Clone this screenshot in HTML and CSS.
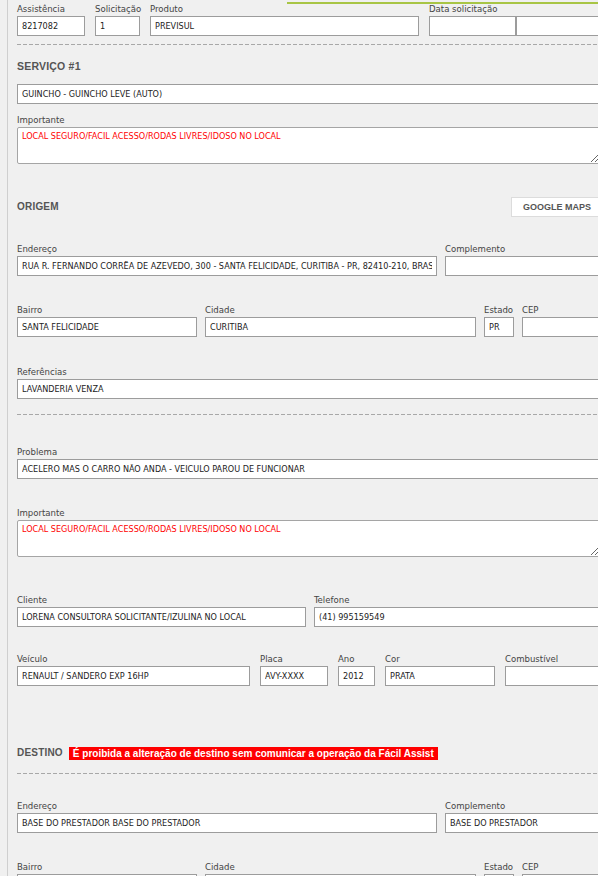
FILE: index.html
```html
<!DOCTYPE html>
<html lang="pt-BR">
<head>
    <meta charset="UTF-8">
    <title>Atendimento - Serviço</title>
    <link rel="stylesheet" href="styles.css">
</head>
<body>

<div class="topline"></div>

<div class="form">

    <!-- Cabeçalho do atendimento -->
    <div class="row row-top">
        <div class="field w-assist">
            <label>Assistência</label>
            <input type="text" value="8217082">
        </div>
        <div class="field w-solic">
            <label>Solicitação</label>
            <input type="text" value="1">
        </div>
        <div class="field w-produto">
            <label>Produto</label>
            <input type="text" value="PREVISUL">
        </div>
        <div class="field grow">
            <label>Data solicitação</label>
            <div class="pair">
                <input type="text" class="w-data" value="">
                <input type="text" value="">
            </div>
        </div>
    </div>

    <div class="dash dash-top"></div>

    <h3 class="section-title title-servico">SERVIÇO #1</h3>
    <input type="text" class="full input-servico" value="GUINCHO - GUINCHO LEVE (AUTO)">

    <div class="field block-importante">
        <label>Importante</label>
        <textarea class="alert-text">LOCAL SEGURO/FACIL ACESSO/RODAS LIVRES/IDOSO NO LOCAL</textarea>
    </div>

    <!-- Origem -->
    <div class="section-head head-origem">
        <h3 class="section-title">ORIGEM</h3>
        <button class="maps-button">GOOGLE MAPS</button>
    </div>

    <div class="row row-first">
        <div class="field w-endereco">
            <label>Endereço</label>
            <input type="text" value="RUA R. FERNANDO CORRËA DE AZEVEDO, 300 - SANTA FELICIDADE, CURITIBA - PR, 82410-210, BRASIL">
        </div>
        <div class="field grow">
            <label>Complemento</label>
            <input type="text" value="">
        </div>
    </div>

    <div class="row">
        <div class="field w-bairro">
            <label>Bairro</label>
            <input type="text" value="SANTA FELICIDADE">
        </div>
        <div class="field w-cidade">
            <label>Cidade</label>
            <input type="text" value="CURITIBA">
        </div>
        <div class="field w-estado">
            <label>Estado</label>
            <input type="text" value="PR">
        </div>
        <div class="field grow">
            <label>CEP</label>
            <input type="text" value="">
        </div>
    </div>

    <div class="row row-ref">
        <div class="field grow">
            <label>Referências</label>
            <input type="text" value="LAVANDERIA VENZA">
        </div>
    </div>

    <div class="dash dash-mid"></div>

    <div class="row row-problema">
        <div class="field grow">
            <label>Problema</label>
            <input type="text" value="ACELERO MAS O CARRO NÃO ANDA - VEICULO PAROU DE FUNCIONAR">
        </div>
    </div>

    <div class="row">
        <div class="field grow">
            <label>Importante</label>
            <textarea class="alert-text">LOCAL SEGURO/FACIL ACESSO/RODAS LIVRES/IDOSO NO LOCAL</textarea>
        </div>
    </div>

    <div class="row row-cliente">
        <div class="field w-cliente">
            <label>Cliente</label>
            <input type="text" value="LORENA CONSULTORA SOLICITANTE/IZULINA NO LOCAL">
        </div>
        <div class="field grow">
            <label>Telefone</label>
            <input type="text" value="(41) 995159549">
        </div>
    </div>

    <div class="row row-veiculo">
        <div class="field w-veiculo">
            <label>Veículo</label>
            <input type="text" value="RENAULT / SANDERO EXP 16HP">
        </div>
        <div class="field w-placa">
            <label>Placa</label>
            <input type="text" value="AVY-XXXX">
        </div>
        <div class="field w-ano">
            <label>Ano</label>
            <input type="text" value="2012">
        </div>
        <div class="field w-cor">
            <label>Cor</label>
            <input type="text" value="PRATA">
        </div>
        <div class="field grow">
            <label>Combustível</label>
            <input type="text" value="">
        </div>
    </div>

    <!-- Destino -->
    <div class="section-head head-destino">
        <h3 class="section-title">DESTINO</h3>
        <span class="warning">É proibida a alteração de destino sem comunicar a operação da Fácil Assist</span>
    </div>

    <div class="dash dash-destino"></div>

    <div class="row row-first">
        <div class="field w-endereco">
            <label>Endereço</label>
            <input type="text" value="BASE DO PRESTADOR BASE DO PRESTADOR">
        </div>
        <div class="field grow">
            <label>Complemento</label>
            <input type="text" value="BASE DO PRESTADOR">
        </div>
    </div>

    <div class="row">
        <div class="field w-bairro">
            <label>Bairro</label>
            <input type="text" value="">
        </div>
        <div class="field w-cidade">
            <label>Cidade</label>
            <input type="text" value="">
        </div>
        <div class="field w-estado">
            <label>Estado</label>
            <input type="text" value="">
        </div>
        <div class="field grow">
            <label>CEP</label>
            <input type="text" value="">
        </div>
    </div>

</div>

</body>
</html>
```

FILE: styles.css
```css
html, body {
    margin: 0;
    padding: 0;
    background-color: #f0f0f0;
    overflow: hidden;
    font-family: "DejaVu Sans Condensed", "Liberation Sans", Arial, sans-serif;
}
.topline {
    position: absolute;
    top: 2px;
    left: 287px;
    right: 0;
    height: 2px;
    background-color: #a8c545;
}
.form {
    margin-left: 7px;
    border-left: 1px solid #cfcfcf;
    padding: 2px 0 40px 9px;
    width: 583px;
    min-height: 876px;
}
.row {
    display: flex;
    gap: 8px;
    margin-top: 27px;
}
.row-top {
    gap: 10px;
    margin-top: 0;
}
.row-first {
    margin-top: 25px;
}
.row-ref {
    margin-top: 28px;
}
.row-problema {
    margin-top: 30px;
}
.row-cliente {
    margin-top: 36px;
}
.row-veiculo {
    gap: 10px;
    margin-top: 25px;
}
.field {
    display: flex;
    flex-direction: column;
}
.field label {
    display: block;
    height: 14px;
    line-height: 14px;
    font-size: 9.5px;
    color: #444;
    white-space: nowrap;
}
.grow {
    flex: 1;
    min-width: 0;
}
.pair {
    display: flex;
}
.pair input:last-child {
    flex: 1;
    min-width: 0;
}
input {
    box-sizing: border-box;
    height: 20px;
    width: 100%;
    margin: 0;
    padding: 0 4px;
    border: 1px solid #9c9c9c;
    border-radius: 0;
    background-color: #fff;
    font-family: "DejaVu Sans Condensed", "Liberation Sans", Arial, sans-serif;
    font-size: 9px;
    color: #222;
    outline: none;
}
textarea {
    box-sizing: border-box;
    display: block;
    width: 100%;
    height: 37px;
    margin: 0;
    padding: 3px 4px;
    border: 1px solid #a5a5a5;
    border-radius: 2px;
    background-color: #fff;
    font-family: "DejaVu Sans Condensed", "Liberation Sans", Arial, sans-serif;
    font-size: 9px;
    outline: none;
}
.alert-text {
    color: #f00;
}
.w-assist { width: 68px; }
.w-solic { width: 45px; }
.w-produto { width: 269px; }
.w-data { width: 87px; flex: none; }
.w-endereco { width: 420px; }
.w-bairro { width: 180px; }
.w-cidade { width: 271px; }
.w-estado { width: 30px; }
.w-cliente { width: 289px; }
.w-veiculo { width: 233px; }
.w-placa { width: 68px; }
.w-ano { width: 37px; }
.w-cor { width: 110px; }

.dash {
    height: 1px;
    background: repeating-linear-gradient(to right, #a8a8a8 0 4px, transparent 4px 6px);
}
.dash-top {
    margin-top: 8px;
}
.dash-mid {
    margin-top: 15px;
}
.dash-destino {
    margin-top: 10px;
}
.section-title {
    margin: 0;
    height: 14px;
    line-height: 14px;
    font-family: "Liberation Sans", Arial, sans-serif;
    font-size: 10px;
    font-weight: bold;
    color: #555;
    letter-spacing: 0.2px;
}
.title-servico {
    margin-top: 14px;
    font-size: 10.5px;
}
.input-servico {
    display: block;
    margin-top: 11px;
}
.block-importante {
    margin-top: 9px;
}
.section-head {
    display: flex;
    align-items: center;
    height: 20px;
}
.head-origem {
    justify-content: space-between;
    margin-top: 33px;
}
.head-destino {
    margin-top: 57px;
}
.maps-button {
    height: 20px;
    margin-right: -4px;
    padding: 0 12px 0 11px;
    border: 1px solid #dcdcdc;
    background-color: #fff;
    font-family: "Liberation Sans", Arial, sans-serif;
    font-size: 9px;
    font-weight: bold;
    color: #555;
    cursor: pointer;
}
.warning {
    margin-left: 6px;
    padding: 0 4px;
    height: 13px;
    line-height: 13px;
    background-color: #f00;
    color: #fff;
    font-family: "Liberation Sans", Arial, sans-serif;
    font-size: 10px;
    font-weight: bold;
    white-space: nowrap;
}
```
